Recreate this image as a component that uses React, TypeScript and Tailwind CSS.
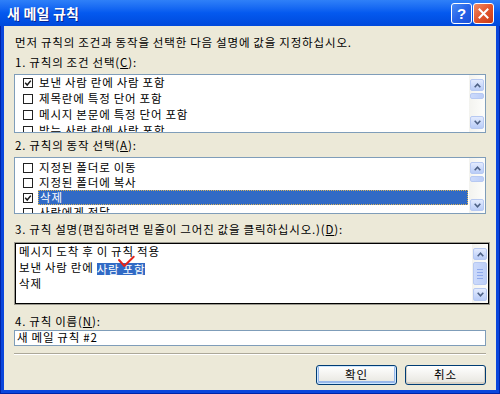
import React from "react";

const T = "text-[11.5px] tracking-[0.85px] [word-spacing:-0.4px] text-black";

function Chevron({ up }: { up?: boolean }) {
  return (
    <svg width="7" height="5" viewBox="0 0 7 5">
      <polyline
        points={up ? "0.7,4.2 3.5,1.2 6.3,4.2" : "0.7,0.8 3.5,3.8 6.3,0.8"}
        fill="none"
        stroke="#4D6185"
        strokeWidth="1.6"
      />
    </svg>
  );
}

function ScrollBar({
  cls,
  upH,
  thumb,
  downH,
  grip,
}: {
  cls: string;
  upH: string;
  thumb: string;
  downH: string;
  grip?: boolean;
}) {
  const btn =
    "rounded-[2px] border border-[#B7C9F2] bg-gradient-to-b from-[#E3EBFE] to-[#B9CCF7] flex items-center justify-center";
  return (
    <div className={`w-[16px] flex flex-col px-[1px] bg-gradient-to-r from-[#F3F3EF] to-[#FDFDFB] ${cls}`}>
      <div className={`${upH} ${btn}`}>
        <Chevron up />
      </div>
      <div className="flex-1 flex flex-col">
        <div
          className={`${thumb} rounded-[2px] border border-[#B7C9F2] bg-gradient-to-r from-[#CCDAFB] to-[#BCCEF8] flex flex-col items-center justify-center gap-[2px]`}
        >
          {grip && (
            <>
              <div className="w-[6px] h-[1px] bg-[#8EA9EC]" />
              <div className="w-[6px] h-[1px] bg-[#8EA9EC]" />
              <div className="w-[6px] h-[1px] bg-[#8EA9EC]" />
              <div className="w-[6px] h-[1px] bg-[#8EA9EC]" />
            </>
          )}
        </div>
      </div>
      <div className={`${downH} ${btn}`}>
        <Chevron />
      </div>
    </div>
  );
}

function Check({ on }: { on?: boolean }) {
  return (
    <span className="w-[10px] h-[10px] border border-[#222] bg-white flex items-center justify-center shrink-0">
      {on && (
        <svg width="8" height="8" viewBox="0 0 8 8">
          <polyline points="1.2,3.8 3.2,6 6.8,1.6" fill="none" stroke="#1a1a1a" strokeWidth="1.5" />
        </svg>
      )}
    </span>
  );
}

function Row({ text, on, sel, h }: { text: string; on?: boolean; sel?: boolean; h: string }) {
  return (
    <div className={`${h} flex items-center pl-[8px] shrink-0`}>
      <Check on={on} />
      {sel ? (
        <span
          className={`ml-[5px] flex-1 h-full flex items-center px-[1px] bg-[#316AC5] border border-dotted border-[#D9B45A] ${T} !text-white`}
        >
          {text}
        </span>
      ) : (
        <span className={`ml-[5px] h-full flex items-center px-[1px] whitespace-nowrap ${T}`}>{text}</span>
      )}
    </div>
  );
}

export default function App() {
  return (
    <div className="w-[500px] h-[394px] flex flex-col bg-[#0A46DC] font-['Noto_Sans_CJK_KR',sans-serif] overflow-hidden shadow-[inset_0_0_0_1px_#0024A8]">
      {/* title bar */}
      <div className="h-[26px] shrink-0 flex items-center pl-[7px] pr-[6px] bg-gradient-to-b from-[#2F80F8] via-[#0459EF] to-[#0049DB]">
        <span className="text-white font-bold text-[14px] [word-spacing:0.5px] [text-shadow:1px_1px_0_#0A2590]">
          새 메일 규칙
        </span>
        <div className="ml-auto flex gap-[1px] mt-[1px]">
          <div className="w-[21px] h-[21px] rounded-[3px] border border-white bg-gradient-to-br from-[#4C8BF5] via-[#2663E8] to-[#1A50D8] flex items-center justify-center">
            <span className="text-white font-bold text-[15px] leading-none font-['Liberation_Sans',sans-serif]">?</span>
          </div>
          <div className="w-[21px] h-[21px] rounded-[3px] border border-white bg-gradient-to-br from-[#F08A62] via-[#E2552C] to-[#C83A16] flex items-center justify-center">
            <svg width="11" height="11" viewBox="0 0 11 11">
              <path d="M1.5 1.5 L9.5 9.5 M9.5 1.5 L1.5 9.5" stroke="white" strokeWidth="2" strokeLinecap="square" />
            </svg>
          </div>
        </div>
      </div>

      {/* body */}
      <div className="flex-1 mx-[4px] mb-[4px] bg-[#ECE9D8] flex flex-col px-[10px]">
        <div className={`mt-[9px] leading-[14px] pl-[1px] ${T}`}>
          먼저 규칙의 조건과 동작을 선택한 다음 설명에 값을 지정하십시오.
        </div>

        <div className={`mt-[6px] leading-[14px] pl-[1px] ${T}`}>
          1. 규칙의 조건 선택(<span className="underline">C</span>):
        </div>
        <div className="mt-[5px] h-[59px] w-[472px] border border-[#7F9DB9] bg-white flex overflow-hidden">
          <div className="flex-1 flex flex-col overflow-hidden">
            <Row h="h-[16px]" text="보낸 사람 란에 사람 포함" on />
            <Row h="h-[16px]" text="제목란에 특정 단어 포함" />
            <Row h="h-[16px]" text="메시지 본문에 특정 단어 포함" />
            <Row h="h-[16px]" text="받는 사람 란에 사람 포함" />
          </div>
          <ScrollBar cls="pt-[4px] pb-[3px]" upH="h-[12px]" thumb="mt-[2px] h-[6px]" downH="h-[13px]" />
        </div>

        <div className={`mt-[5px] leading-[14px] pl-[1px] ${T}`}>
          2. 규칙의 동작 선택(<span className="underline">A</span>):
        </div>
        <div className="mt-[5px] h-[57px] w-[472px] border border-[#7F9DB9] bg-white flex overflow-hidden">
          <div className="flex-1 flex flex-col overflow-hidden pt-[2px] pr-[1px]">
            <Row h="h-[15px]" text="지정된 폴더로 이동" />
            <Row h="h-[15px]" text="지정된 폴더에 복사" />
            <Row h="h-[15px]" text="삭제" on sel />
            <Row h="h-[15px]" text="사람에게 전달" />
          </div>
          <ScrollBar cls="pt-[4px] pb-[2px]" upH="h-[12px]" thumb="mt-[2px] h-[6px]" downH="h-[12px]" />
        </div>

        <div className={`mt-[8px] leading-[14px] pl-[1px] ${T}`}>
          3. 규칙 설명(편집하려면 밑줄이 그어진 값을 클릭하십시오.)(<span className="underline">D</span>):
        </div>
        <div className="relative mt-[6px] h-[63px] w-[476px] border border-[#9C9A90] flex">
          <div className="flex-1 border border-black bg-white flex overflow-hidden">
            <div className={`flex-1 flex flex-col pl-[3px] -mt-[1px] ${T} leading-[16px]`}>
              <div className="h-[16px]">메시지 도착 후 이 규칙 적용</div>
              <div className="h-[16px]">
                보낸 사람 란에{" "}
                <span className="inline-block h-[13px] leading-[13px] align-[-2px] bg-[#316AC5] text-white underline">
                  사람 포함
                </span>
              </div>
              <div className="h-[16px]">삭제</div>
            </div>
            <ScrollBar cls="pt-[4px] pb-[2px]" upH="h-[12px]" thumb="mt-[2px] h-[23px]" downH="h-[13px]" grip />
          </div>
          <svg className="absolute left-[100px] top-[10px]" width="22" height="16" viewBox="0 0 22 16">
            <polyline
              points="4,7 9.3,13 18.7,3.7"
              fill="none"
              stroke="#E3241B"
              strokeWidth="2"
              strokeLinecap="round"
              strokeLinejoin="round"
            />
          </svg>
        </div>

        <div className={`mt-[9px] leading-[14px] pl-[1px] ${T}`}>
          4. 규칙 이름(<span className="underline">N</span>):
        </div>
        <div className={`mt-[2px] h-[16px] w-[472px] border border-[#7F9DB9] bg-white flex items-center pl-[2px] ${T}`}>
          새 메일 규칙 #2
        </div>

        <div className="mt-[7px] w-[472px] h-[1px] bg-[#ACA899]" />
        <div className="w-[472px] h-[1px] bg-white" />

        <div className="mt-[10px] w-[472px] flex justify-end gap-[8px]">
          <div className="w-[81px] h-[20px] rounded-[3px] border border-[#003C74] bg-gradient-to-b from-white to-[#E6E5DE] shadow-[inset_0_0_0_1px_#CEE7FF,inset_0_-1px_0_2px_#98B8EA] flex items-center justify-center">
            <span className={T}>확인</span>
          </div>
          <div className="w-[81px] h-[20px] rounded-[3px] border border-[#003C74] bg-gradient-to-b from-white to-[#E6E5DE] shadow-[inset_0_-1px_0_1px_#D6D0C5] flex items-center justify-center">
            <span className={T}>취소</span>
          </div>
        </div>
      </div>
    </div>
  );
}
